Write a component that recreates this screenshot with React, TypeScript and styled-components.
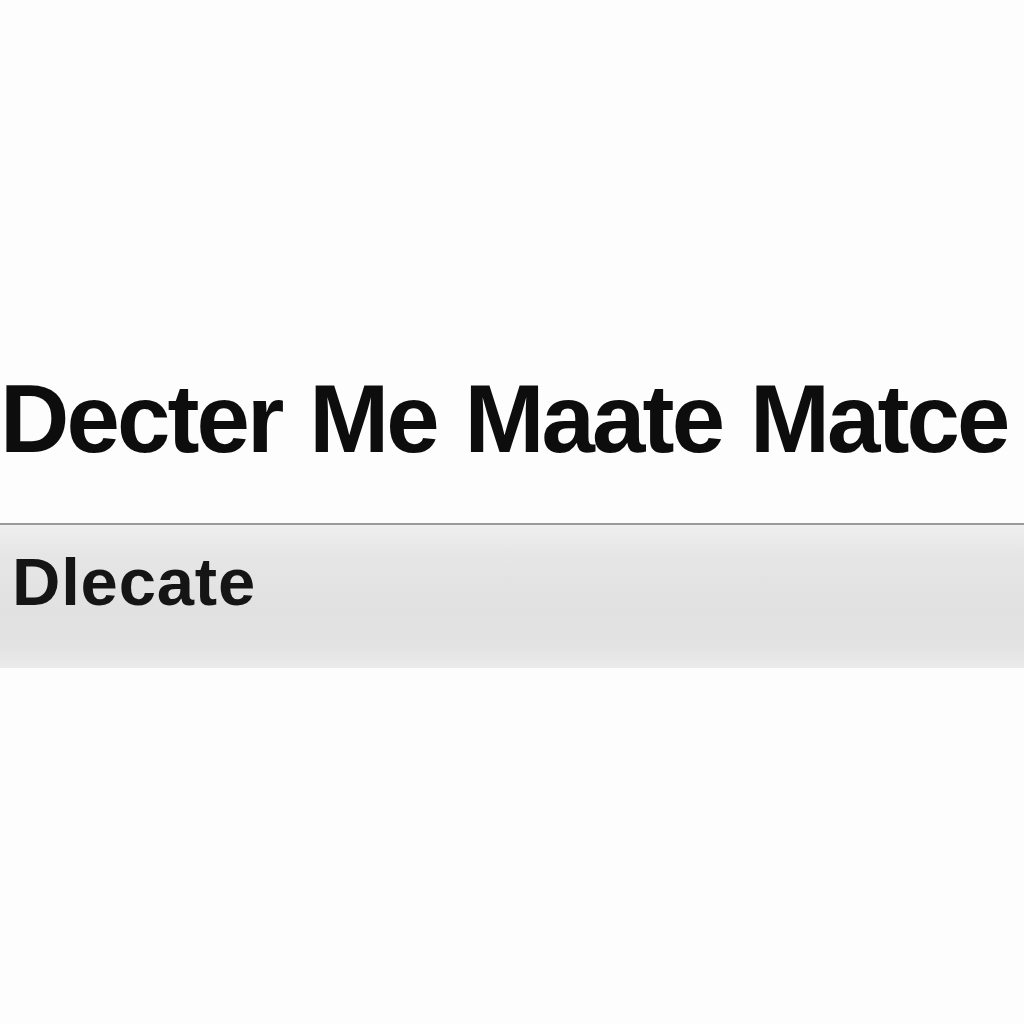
import React from "react";
import styled, { createGlobalStyle } from "styled-components";

const Global = createGlobalStyle`
  html, body {
    margin: 0;
    padding: 0;
    background: #fdfdfd;
  }
  body {
    font-family: "Liberation Sans", Arial, Helvetica, sans-serif;
    color: #111;
  }
`;

const Page = styled.main`
  display: flex;
  flex-direction: column;
  min-height: 1024px;
  padding-top: 371px;
  box-sizing: border-box;
`;

const Title = styled.h1`
  margin: 0;
  padding-left: 0;
  font-size: 96px;
  line-height: 1;
  font-weight: 700;
  letter-spacing: -2.9px;
  word-spacing: 4px;
  white-space: nowrap;
  color: #0d0d0d;
`;

const Bar = styled.div`
  margin-top: 56px;
  height: 145px;
  box-sizing: border-box;
  border-top: 2px solid #9a9a9a;
  background: linear-gradient(
    to bottom,
    #efefef 0%,
    #e6e6e6 20%,
    #e1e1e1 60%,
    #e3e3e3 85%,
    #ebebeb 100%
  );
  display: flex;
  align-items: flex-start;
  padding: 23px 12px 0;
`;

const BarLabel = styled.span`
  font-size: 67px;
  line-height: 1;
  font-weight: 700;
  letter-spacing: 0.8px;
  color: #151515;
`;

export default function App() {
  return (
    <>
      <Global />
      <Page>
        <Title>Decter Me Maate Matce</Title>
        <Bar>
          <BarLabel>Dlecate</BarLabel>
        </Bar>
      </Page>
    </>
  );
}
